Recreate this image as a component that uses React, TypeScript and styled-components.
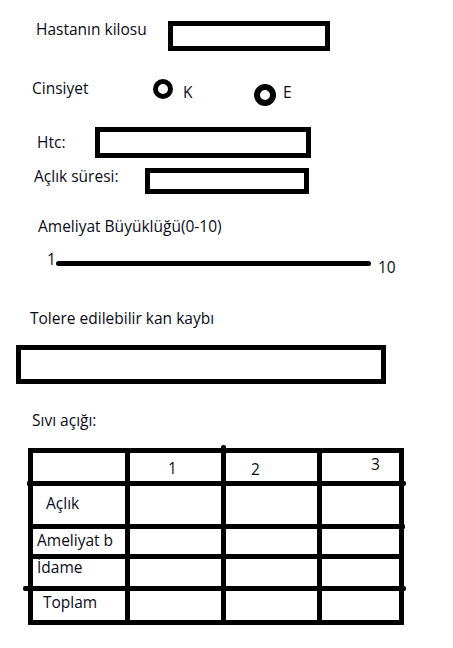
import styled, { createGlobalStyle } from "styled-components";

const GlobalStyle = createGlobalStyle`
  html, body {
    margin: 0;
    padding: 0;
    background: #ffffff;
  }
  body {
    font-family: "Open Sans", "Noto Sans", "Liberation Sans", sans-serif;
    font-size: 15.5px;
    color: #000000;
  }
`;

const Page = styled.div`
  width: 453px;
  height: 648px;
  display: flex;
  flex-direction: column;
  align-items: flex-start;
  overflow: hidden;
`;

const Row = styled.div<{ $top: number }>`
  display: flex;
  align-items: flex-start;
  margin-top: ${(p) => p.$top}px;
`;

const Label = styled.span<{ $left: number; $top?: number; $w?: number }>`
  display: block;
  flex: none;
  margin-left: ${(p) => p.$left}px;
  margin-top: ${(p) => p.$top ?? 0}px;
  width: ${(p) => (p.$w ? `${p.$w}px` : "auto")};
  line-height: 20px;
  white-space: nowrap;
  color: #0a0a18;
`;

const InputBox = styled.div<{ $left?: number; $top?: number; $w: number; $h: number }>`
  box-sizing: border-box;
  flex: none;
  margin-left: ${(p) => p.$left ?? 0}px;
  margin-top: ${(p) => p.$top ?? 0}px;
  width: ${(p) => p.$w}px;
  height: ${(p) => p.$h}px;
  border: 5px solid #000;
  background: #fff;
`;

const Radio = styled.span<{ $size: number; $ring: number; $top: number }>`
  box-sizing: border-box;
  display: block;
  flex: none;
  width: ${(p) => p.$size}px;
  height: ${(p) => p.$size}px;
  margin-top: ${(p) => p.$top}px;
  border-radius: 50%;
  border: ${(p) => p.$ring}px solid #000;
`;

const Track = styled.div`
  flex: none;
  width: 315px;
  height: 5px;
  margin-top: 12px;
  border-radius: 3px;
  background: #000;
`;

const Grid = styled.div`
  position: relative;
  margin-left: 28px;
  margin-top: 18px;
  display: grid;
  grid-template-columns: 92px 91px 91px 77px;
  grid-template-rows: 28px 38px 25px 27px 29px;
  gap: 5px;
  padding: 5px;
  background: #000;
`;

const Cell = styled.div<{ $x?: number; $y?: number }>`
  background: #fff;
  padding-left: ${(p) => p.$x ?? 0}px;
  padding-top: ${(p) => p.$y ?? 0}px;
  line-height: 14px;
  white-space: nowrap;
  color: #0a0a18;
`;

// little overhangs where the hand-drawn lines run past the grid
const Stub = styled.span<{ $x: number; $y: number; $w: number; $h: number }>`
  position: absolute;
  left: ${(p) => p.$x}px;
  top: ${(p) => p.$y}px;
  width: ${(p) => p.$w}px;
  height: ${(p) => p.$h}px;
  border-radius: 2px;
  background: #000;
`;

const headers = [
  { text: "1", x: 38, y: 8 },
  { text: "2", x: 25, y: 9 },
  { text: "3", x: 49, y: 4 },
];

const rows = [
  { text: "Açlık", x: 13, y: 10 },
  { text: "Ameliyat b", x: 4, y: 4 },
  { text: "İdame", x: 4, y: 1 },
  { text: "Toplam", x: 10, y: 4 },
];

export default function App() {
  return (
    <>
      <GlobalStyle />
      <Page>
        <Row $top={19}>
          <Label $left={36} $w={132}>Hastanın kilosu</Label>
          <InputBox $top={2} $w={162} $h={30} />
        </Row>

        <Row $top={27}>
          <Label $left={32} $w={121}>Cinsiyet</Label>
          <Radio $size={20} $ring={5} $top={1} />
          <Label $left={10} $top={4} $w={71}>K</Label>
          <Radio $size={22} $ring={6} $top={6} />
          <Label $left={7} $top={4}>E</Label>
        </Row>

        <Row $top={21}>
          <Label $left={37} $top={5} $w={58}>Htc:</Label>
          <InputBox $w={216} $h={31} />
        </Row>

        <Row $top={8}>
          <Label $left={34} $w={111}>Açlık süresi:</Label>
          <InputBox $top={2} $w={164} $h={26} />
        </Row>

        <Row $top={22}>
          <Label $left={38}>Ameliyat Büyüklüğü(0-10)</Label>
        </Row>

        <Row $top={13}>
          <Label $left={47} $w={9}>1</Label>
          <Track />
          <Label $left={7} $top={8}>10</Label>
        </Row>

        <Row $top={31}>
          <Label $left={30}>Tolere edilebilir kan kaybı</Label>
        </Row>

        <Row $top={17}>
          <InputBox $left={16} $w={370} $h={39} />
        </Row>

        <Row $top={26}>
          <Label $left={32}>Sıvı açığı:</Label>
        </Row>

        <Grid>
          <Cell />
          {headers.map((h) => (
            <Cell key={h.text} $x={h.x} $y={h.y}>
              {h.text}
            </Cell>
          ))}
          {rows.map((r) => [
            <Cell key={r.text} $x={r.x} $y={r.y}>
              {r.text}
            </Cell>,
            <Cell key={r.text + "-1"} />,
            <Cell key={r.text + "-2"} />,
            <Cell key={r.text + "-3"} />,
          ])}
          <Stub $x={193} $y={-3} $w={5} $h={5} />
          <Stub $x={-1} $y={33} $w={3} $h={5} />
          <Stub $x={374} $y={33} $w={4} $h={5} />
          <Stub $x={374} $y={76} $w={3} $h={5} />
          <Stub $x={-5} $y={138} $w={7} $h={5} />
          <Stub $x={374} $y={138} $w={4} $h={5} />
        </Grid>
      </Page>
    </>
  );
}
